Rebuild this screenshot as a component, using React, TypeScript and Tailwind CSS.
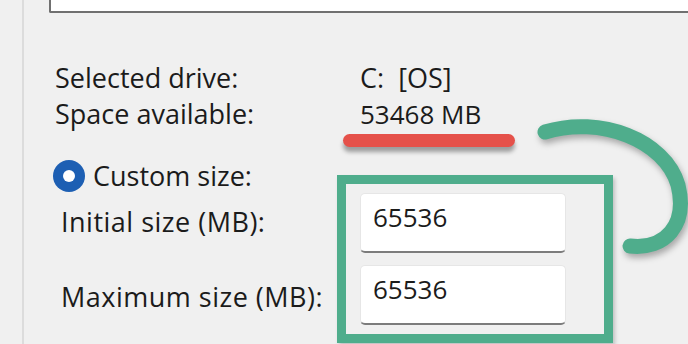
import React from 'react';

const font = { fontFamily: '"Open Sans", "Noto Sans", sans-serif' };

const SizeRow: React.FC<{ label: string; value: string; labelTop: string }> = ({ label, value, labelTop }) => (
  <div className="flex items-start">
    <div className={`w-[305px] pl-[6px] tracking-[0.5px] ${labelTop}`}>{label}</div>
    <div className="w-[206px] h-[60px] bg-white rounded-[5px] border border-[#e6e6e6] border-b-2 border-b-[#7c7c7c] pl-[12px] pt-[5px] text-[26px]">
      {value}
    </div>
  </div>
);

export default function App() {
  return (
    <div
      className="relative w-[688px] h-[344px] overflow-hidden bg-[#f0f0f0] text-[#1b1b1b] text-[27px] leading-[36px] flex"
      style={font}
    >
      {/* left edge of the dialog */}
      <div className="w-[24px] shrink-0 border-r-2 border-[#dcdcdc]" />

      <div className="flex-1 flex flex-col">
        {/* bottom of the drive list box */}
        <div className="ml-[25px] h-[13px] bg-white border-l-2 border-b-2 border-[#707070] rounded-bl-[2px]" />

        <div className="mt-[47px] pl-[31px] grid grid-cols-[305px_1fr]">
          <div>Selected drive:</div>
          <div className="whitespace-pre">C:  [OS]</div>
          <div>Space available:</div>
          <div className="text-[26px]">53468 MB</div>
        </div>

        <div className="mt-[26px] pl-[29px] flex items-center gap-[8px]">
          <div className="w-[32px] h-[32px] rounded-full bg-[#1d5fb3] flex items-center justify-center">
            <div className="w-[12px] h-[12px] rounded-full bg-white" />
          </div>
          <span>Custom size:</span>
        </div>

        <div className="mt-[-1px] pl-[31px] flex flex-col gap-[12px]">
          <SizeRow label="Initial size (MB):" value="65536" labelTop="pt-[11px]" />
          <SizeRow label="Maximum size (MB):" value="65536" labelTop="pt-[14px]" />
        </div>
      </div>

      {/* annotations */}
      <div className="absolute left-[343px] top-[134px] w-[172px] h-[13px] rounded-full bg-[#e5514a] shadow-[0_5px_4px_rgba(0,0,0,0.35)]" />
      <div className="absolute left-[337px] top-[175px] w-[276px] h-[168px] border-[9px] border-[#4fad8c] shadow-[2px_3px_4px_rgba(0,0,0,0.2)]" />
      <svg
        className="absolute inset-0 pointer-events-none drop-shadow-[2px_4px_3px_rgba(0,0,0,0.3)]"
        width="688"
        height="344"
        viewBox="0 0 688 344"
      >
        <path
          d="M545 132 C600 115 665 140 678 185 C688 225 665 250 630 246"
          fill="none"
          stroke="#4fad8c"
          strokeWidth="15"
          strokeLinecap="round"
        />
      </svg>
    </div>
  );
}
